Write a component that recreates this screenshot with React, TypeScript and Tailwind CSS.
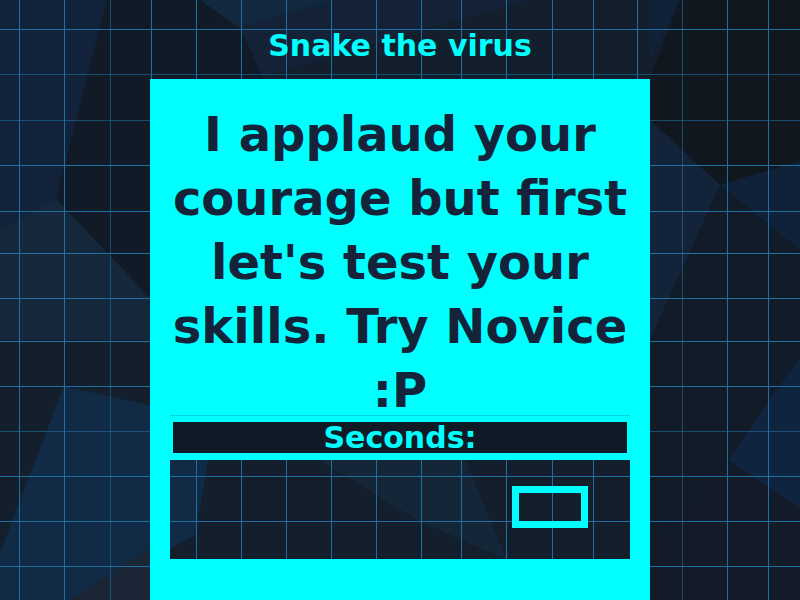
const GRID_X = [19, 64, 110, 151, 196, 241, 286, 331, 376, 421, 461, 506, 552, 593, 637, 682, 727, 768];
const GRID_Y = [29, 74, 120, 165, 211, 253, 298, 341, 386, 431, 476, 521, 566];
const DIM_X = [110, 682];
const DIM_Y = [74, 120, 431];

// low-poly backdrop + grid, drawn once behind everything
const Backdrop = () => (
  <svg className="absolute inset-0" width={800} height={600} viewBox="0 0 800 600">
    <rect width="800" height="600" fill="#131f2d" />
    <polygon points="0,0 107,0 56,199 0,229" fill="#12223a" />
    <polygon points="107,0 200,0 240,28 263,77 150,298 56,199" fill="#111b27" />
    <polygon points="200,0 333,0 240,28" fill="#11283f" />
    <polygon points="333,0 530,0 420,30 263,77 240,28" fill="#132236" />
    <polygon points="0,229 56,199 150,298 150,340 0,340" fill="#15273a" />
    <polygon points="64,386 215,420 195,535 150,560 70,600 0,600 0,553" fill="#112a45" />
    <polygon points="70,600 150,548 150,600" fill="#1a2636" />
    <polygon points="320,460 465,460 507,560 417,520" fill="#152638" />
    <polygon points="680,0 800,0 800,161 720,185 650,120 645,90" fill="#11171f" />
    <polygon points="650,0 680,0 650,60" fill="#12213a" />
    <polygon points="720,185 800,161 800,250" fill="#10223a" />
    <polygon points="650,120 720,185 650,340" fill="#13233a" />
    <polygon points="720,185 800,250 800,357 728,460 650,550 650,340" fill="#121c28" />
    <polygon points="800,357 728,460 800,508" fill="#0f243e" />
    <polygon points="728,460 800,508 800,600 650,600 650,550" fill="#121b27" />
    {GRID_X.map(x => (
      <line key={'x' + x} x1={x + 0.5} y1={0} x2={x + 0.5} y2={600} stroke="#1f70a0" strokeOpacity={DIM_X.includes(x) ? 0.6 : 1} />
    ))}
    {GRID_Y.map(y => (
      <line key={'y' + y} x1={0} y1={y + 0.5} x2={800} y2={y + 0.5} stroke="#1f70a0" strokeOpacity={DIM_Y.includes(y) ? 0.6 : 1} />
    ))}
  </svg>
);

export default function App() {
  return (
    <div className="relative w-[800px] h-[600px] overflow-hidden font-['DejaVu_Sans',sans-serif] font-bold">
      <Backdrop />
      <div className="relative flex flex-col items-center h-full">
        <div className="h-[79px] pt-[12px] flex items-center justify-center">
          <h1 className="text-[30px] leading-none text-[#00ffff]">Snake the virus</h1>
        </div>

        <div className="w-[500px] flex-1 flex flex-col">
          <div className="bg-[#00ffff] pt-[23px] pb-[7px]">
            <p className="px-[10px] text-center text-[48px] leading-[64px] text-[#15233a]">
              I applaud your courage but first let's test your skills. Try Novice :P
            </p>
            <div className="mx-[20px] -mt-[7px] h-px bg-[#00d8dc]" />
            <div className="mx-[23px] mt-[6px] h-[31px] bg-[#0f1a26] flex items-center justify-center">
              <span className="text-[30px] leading-none text-[#00ffff]">Seconds:</span>
            </div>
          </div>

          {/* game canvas: transparent so the backdrop shows through */}
          <div className="flex h-[99px]">
            <div className="w-[20px] bg-[#00ffff]" />
            <div className="relative w-[460px]">
              <div className="absolute left-[342px] top-[26px] w-[76px] h-[42px] border-[7px] border-[#00ffff]" />
            </div>
            <div className="w-[20px] bg-[#00ffff]" />
          </div>

          <div className="flex-1 bg-[#00ffff]" />
        </div>
      </div>
    </div>
  );
}
